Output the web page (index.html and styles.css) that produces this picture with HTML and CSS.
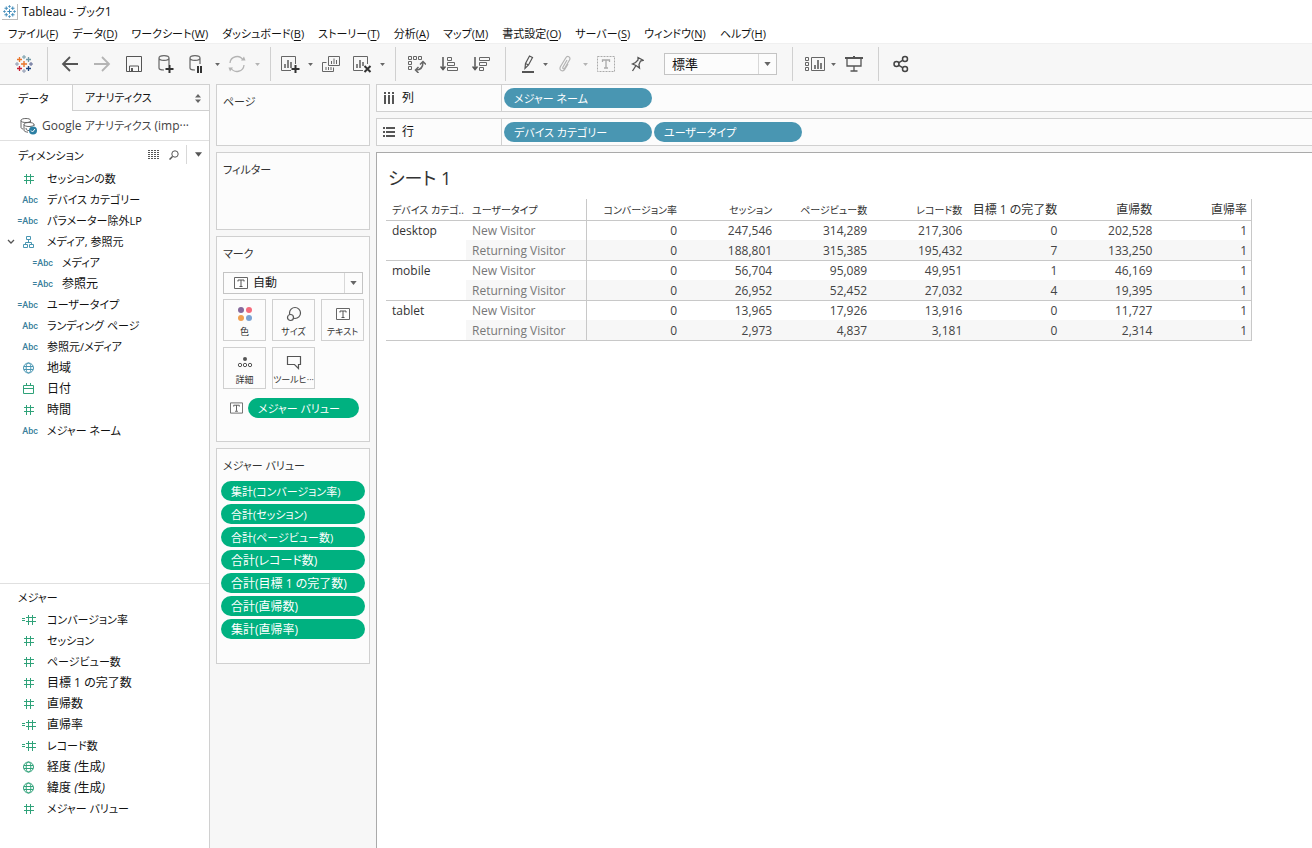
FILE: index.html
```html
<!DOCTYPE html>
<html lang="ja">
<head>
<meta charset="utf-8">
<title>Tableau - ブック1</title>
<link rel="stylesheet" href="styles.css">
</head>
<body>
<svg class="defs" aria-hidden="true">
  <symbol id="plus-ring" viewBox="0 0 18 18"><path d="M9 6v6M6 9h6" stroke="var(--c1)" stroke-width="1.4"/><path d="M9 0v4M7 2h4" stroke="var(--c2)"/><path d="M9 14v4M7 16h4" stroke="var(--c3)"/><path d="M2 7v4M0 9h4" stroke="var(--c3)"/><path d="M16 7v4M14 9h4" stroke="var(--c4)"/><path d="M4.500 2v5M2 4.500h5" stroke="var(--c1)" stroke-width="1.300"/><path d="M13.500 2v5M11 4.500h5" stroke="var(--c2)" stroke-width="1.300"/><path d="M4.500 11v5M2 13.500h5" stroke="var(--c5)" stroke-width="1.300"/><path d="M13.500 11v5M11 13.500h5" stroke="var(--c6)" stroke-width="1.300"/></symbol>
  <symbol id="caret" viewBox="0 0 8 5"><path d="M0 0h8L4 5z" fill="currentColor"/></symbol>
  <symbol id="hash" viewBox="0 0 14 12"><path d="M4.500 1v10M8.500 1v10M2 3.500h10M2 7.500h10" fill="none" stroke="currentColor"/></symbol>
  <symbol id="calc-hash" viewBox="0 0 14 12"><path d="M6.500 1v10M10.500 1v10M4 3.500h10M4 7.500h10M0 4.500h3M0 6.500h3" fill="none" stroke="currentColor"/></symbol>
  <symbol id="globe" viewBox="0 0 14 12"><g fill="none" stroke="currentColor"><circle cx="6.500" cy="6" r="5"/><ellipse cx="6.500" cy="6" rx="2.300" ry="5"/><path d="M2 4.500h9M2 7.500h9"/></g></symbol>
  <symbol id="cal" viewBox="0 0 14 12"><path d="M1.500 2.500h10v8h-10zM1.500 5.500h10M4.500 0v3M8.500 0v3" fill="none" stroke="currentColor"/></symbol>
  <symbol id="tree" viewBox="0 0 14 12"><path d="M4.500.5h4v3h-4zM1.500 8.500h4v3h-4zM7.500 8.500h4v3h-4zM6.500 4v2.500M3.500 8V6.500h6V8" fill="none" stroke="currentColor"/></symbol>
  <symbol id="t-box" viewBox="0 0 14 12"><path d="M.5.5h13v11H.5z" fill="#fff" stroke="#666"/><path d="M4 4.500V3h6v1.500M7 3v6M5.500 9.500h3" fill="none" stroke="#555"/></symbol>
</svg>

<header class="titlebar">
  <svg class="app-icon" viewBox="0 0 18 18" aria-hidden="true"><use href="#plus-ring"/></svg>
  <span>Tableau - <span class="kana">ブック</span>1</span>
</header>
<nav class="menubar" aria-label="メニュー">
  <button>ファイル(<u>F</u>)</button><button>データ(<u>D</u>)</button><button>ワークシート(<u>W</u>)</button><button>ダッシュボード(<u>B</u>)</button><button>ストーリー(<u>T</u>)</button><button>分析(<u>A</u>)</button><button>マップ(<u>M</u>)</button><button>書式設定(<u>O</u>)</button><button>サーバー(<u>S</u>)</button><button>ウィンドウ(<u>N</u>)</button><button>ヘルプ(<u>H</u>)</button>
</nav>

<div class="toolbar" role="toolbar" aria-label="ツール">
  <div class="group start">
    <button aria-label="スタート"><svg class="logo" width="18" height="18"><use href="#plus-ring"/></svg></button>
  </div>
  <div class="group history">
    <button aria-label="元に戻す"><svg width="18" height="16" viewBox="0 0 18 16"><path d="M17 8H2M9 1L2 8l7 7" fill="none" stroke="#555" stroke-width="1.800"/></svg></button>
    <button aria-label="やり直す"><svg width="18" height="16" viewBox="0 0 18 16"><path d="M1 8h15M9 1l7 7-7 7" fill="none" stroke="#b4b4b4" stroke-width="1.800"/></svg></button>
    <button aria-label="保存"><svg width="18" height="18" viewBox="0 0 18 18"><path d="M1.500 1.500h15v15h-15zM4.500 16v-5h9v5" fill="none" stroke="#555"/><path d="M6 13h2v3H6z" fill="#555"/></svg></button>
    <button aria-label="新しいデータソース"><svg width="18" height="20" viewBox="0 0 18 20"><path d="M7 16c-3 0-5-.8-5-2V4m10 0v7M12 4c0 1.400-2.200 2.400-5 2.400S2 5.400 2 4s2.200-2.400 5-2.400S12 2.600 12 4z" fill="none" stroke="#666" stroke-width="1.200"/><path d="M12.500 11v8M8.500 15h8" stroke="#333" stroke-width="2"/></svg></button>
    <button class="split" aria-label="自動更新の一時停止"><svg width="18" height="20" viewBox="0 0 18 20"><path d="M7 16c-3 0-5-.8-5-2V4m10 0v6M12 4c0 1.400-2.200 2.400-5 2.400S2 5.400 2 4s2.200-2.400 5-2.400S12 2.600 12 4z" fill="none" stroke="#666" stroke-width="1.200"/><path d="M10 12v7M13 12v7" stroke="#333" stroke-width="2"/></svg></button>
    <button class="drop" aria-label="更新オプション"><svg><use href="#caret"/></svg></button>
    <button class="split" aria-label="更新"><svg width="18" height="18" viewBox="0 0 18 18"><path d="M2 8a7 7 0 0 1 13-3M16 10a7 7 0 0 1-13 3" fill="none" stroke="#b4b4b4" stroke-width="1.300"/><path d="M13 5.500h4.500L16 1.500zM5 12.500H.5l1.500 4z" fill="#b4b4b4"/></svg></button>
    <button class="drop off" aria-label="更新メニュー"><svg><use href="#caret"/></svg></button>
  </div>
  <div class="group sheets">
    <button class="split" aria-label="新しいワークシート"><svg width="20" height="18" viewBox="0 0 20 18"><path d="M11 15.500H1.500v-14h14V9" fill="none" stroke="#666"/><path d="M5 9v4M8 5v8M11 7v6" stroke="#666" stroke-width="1.600"/><path d="M15.500 10v8M11.500 14h8" stroke="#333" stroke-width="2"/></svg></button>
    <button class="drop" aria-label="新規メニュー"><svg><use href="#caret"/></svg></button>
    <button aria-label="複製"><svg width="18" height="18" viewBox="0 0 18 18"><path d="M6.500 1.500h11v9h-11zM4.500 7.500h-4v9h11v-4" fill="none" stroke="#666"/><path d="M9.500 6v3M12 3.500V9M14.500 5v4M4 12v3M6.500 12v3M9 12v3" stroke="#666"/></svg></button>
    <button class="split" aria-label="シートのクリア"><svg width="20" height="18" viewBox="0 0 20 18"><path d="M11 15.500H1.500v-14h14V9" fill="none" stroke="#666"/><path d="M5 9v4M8 5v8M11 7v4" stroke="#666" stroke-width="1.600"/><path d="M12.500 11l6 6M18.500 11l-6 6" stroke="#333" stroke-width="2"/></svg></button>
    <button class="drop" aria-label="クリアメニュー"><svg><use href="#caret"/></svg></button>
  </div>
  <div class="group sorting">
    <button aria-label="行と列の入れ替え"><svg width="18" height="18" viewBox="0 0 18 18"><path d="M.5 1.500h3v3h-3zM5.500 1.500h3v3h-3zM10.500 1.500h3v3h-3zM.5 6.500h3v3h-3zM.5 11.500h3v3h-3z" fill="none" stroke="#666"/><path d="M15 7c0 5-2 8-7 8M12 9.500L15 6.500l3 3M10.500 12l-3 3 3 3" fill="none" stroke="#666" stroke-width="1.500"/></svg></button>
    <button aria-label="昇順で並べ替え"><svg width="18" height="18" viewBox="0 0 18 18"><path d="M3 2v12M.5 11.500L3 14.500l2.500-3" fill="none" stroke="#555" stroke-width="1.500"/><path d="M7.500 2.500h4v3h-4zM7.500 7.500h7v3h-7zM7.500 12.500h10v3h-10z" fill="none" stroke="#666"/></svg></button>
    <button aria-label="降順で並べ替え"><svg width="18" height="18" viewBox="0 0 18 18"><path d="M3 2v12M.5 11.500L3 14.500l2.500-3" fill="none" stroke="#555" stroke-width="1.500"/><path d="M7.500 2.500h10v3h-10zM7.500 7.500h7v3h-7zM7.500 12.500h4v3h-4z" fill="none" stroke="#666"/></svg></button>
  </div>
  <div class="group marks-tools">
    <button class="pen" aria-label="ハイライト"><svg width="14" height="20" viewBox="0 0 14 20"><path d="M8.500 2L11.500 3.500 7.500 11 4 14.500l.5-5zM4.500 9.500l3 1.500" fill="none" stroke="#555" stroke-width="1.200"/><path d="M1 18h12" stroke="#555" stroke-width="2"/></svg></button>
    <button class="drop" aria-label="ハイライトメニュー"><svg><use href="#caret"/></svg></button>
    <button class="split" aria-label="グループ"><svg width="14" height="18" viewBox="0 0 14 18"><path d="M9 5l-4 7c-.8 1.600 1 2.500 1.800 1L11.500 5c1.500-3-2-5-3.800-2L2.500 11.500c-2 4 2.500 6 4.500 2.500L10 9" fill="none" stroke="#b4b4b4" stroke-width="1.200"/></svg></button>
    <button class="drop off" aria-label="グループメニュー"><svg><use href="#caret"/></svg></button>
    <button aria-label="マークラベルの表示"><svg width="18" height="16" viewBox="0 0 18 16"><path d="M.5.5h17v15H.5z" fill="none" stroke="#aaa" stroke-dasharray="2 1"/><path d="M5.500 6V4h7v2M9 4v8M7 12h4" fill="none" stroke="#aaa" stroke-width="1.300"/></svg></button>
    <button class="split" aria-label="ピン"><svg width="14" height="18" viewBox="0 0 14 18"><path d="M8 2.500l5 2.800-2.500.7-1.500 3.500.5 3.500-3.500-2.500-3.500-1.500 3-1.500L8 5zM6 10.500l-3.500 5.500" fill="none" stroke="#555" stroke-width="1.300"/></svg></button>
    <label class="picker fit"><select aria-label="ビューのサイズ"><option>標準</option></select><span class="pick-arrow"><svg><use href="#caret"/></svg></span></label>
  </div>
  <div class="group views">
    <button class="show-me" aria-label="表示形式"><svg width="20" height="16" viewBox="0 0 20 16"><path d="M.5 1.500h3v3h-3zM.5 6.500h3v3h-3zM.5 11.500h3v3h-3zM6.500 1.500h13v13h-13z" fill="none" stroke="#666"/><path d="M10 9v4M13 4v9M16 7v6" stroke="#666" stroke-width="1.700"/></svg></button>
    <button class="drop" aria-label="表示メニュー"><svg><use href="#caret"/></svg></button>
    <button aria-label="プレゼンテーション"><svg width="18" height="16" viewBox="0 0 18 16"><path d="M0 2h18M9 0v2" stroke="#555" stroke-width="2"/><path d="M2 2v8h14V2M9 10v5M5.500 15h7" fill="none" stroke="#555" stroke-width="1.300"/></svg></button>
  </div>
  <div class="group share">
    <button aria-label="共有"><svg width="16" height="18" viewBox="0 0 16 18"><g fill="none" stroke="#444" stroke-width="1.500"><circle cx="3.500" cy="9" r="2.500"/><circle cx="12" cy="4" r="2.500"/><circle cx="12" cy="14" r="2.500"/><path d="M5.500 7.800L10 5.200M5.500 10.200L10 12.800"/></g></svg></button>
  </div>
</div>

<main class="workspace">
  <aside class="data-pane">
    <div class="tabs">
      <button class="tab active kana">データ</button>
      <button class="tab kana">アナリティクス<svg width="6" height="9" viewBox="0 0 6 9"><path d="M0 3.500L3 0l3 3.500zM0 5.500h6L3 9z" fill="#666"/></svg></button>
    </div>
    <button class="source"><svg width="18" height="18" viewBox="0 0 18 18"><path d="M3 12c-1.500-.3-2-1-2-1.800V3.500M10.500 3.500V5M10.500 3.500C10.500 5 8.500 5.500 6 5.500S1 5 1 3.500 3.500 1.500 6 1.500s4.500.6 4.500 2zM4 7.500v5.700c0 1 1.500 1.800 4 2M4 7.500c0-1.200 2-2 5-2s5 .8 5 2-2 2-5 2-5-.8-5-2zM14 7.500V9M6 11c0 2 1 2.500 3 2.500" fill="none" stroke="#666"/><circle cx="13" cy="13.500" r="4" fill="#2b7fa3"/><path d="M11 13.500l1.500 1.500 2.500-3" fill="none" stroke="#fff"/></svg><span>Google <span class="kana">アナリティクス</span> (imp···</span></button>
    <section class="fields dimensions">
      <div class="fields-head">
        <h2 class="kana">ディメンション</h2>
        <button aria-label="リスト表示"><svg width="12" height="9" viewBox="0 0 12 9"><path d="M0 .5h12M0 2.500h12M0 4.500h12M0 6.500h12M0 8.500h12" stroke="#555" stroke-dasharray="2 1"/></svg></button>
        <button aria-label="検索"><svg width="10" height="10" viewBox="0 0 10 10"><circle cx="6" cy="4" r="3.200" fill="none" stroke="#555"/><path d="M3.500 6.500L.5 9.500" stroke="#555" stroke-width="1.500"/></svg></button>
        <button class="more" aria-label="メニュー"><svg width="7" height="5"><use href="#caret"/></svg></button>
      </div>
      <ul class="field-list">
        <li class="green kana"><svg><use href="#hash"/></svg>セッションの数</li>
        <li class="kana"><i>Abc</i>デバイス カテゴリー</li>
        <li class="kana"><i>=Abc</i>パラメーター除外LP</li>
        <li class="open kana"><svg class="twisty" viewBox="0 0 8 6"><path d="M1 1l3 3 3-3" fill="none" stroke="#555" stroke-width="1.300"/></svg><svg><use href="#tree"/></svg>メディア, 参照元</li>
        <li class="child kana"><i>=Abc</i>メディア</li>
        <li class="child"><i>=Abc</i>参照元</li>
        <li class="kana"><i>=Abc</i>ユーザータイプ</li>
        <li class="kana"><i>Abc</i>ランディング ページ</li>
        <li class="kana"><i>Abc</i>参照元/メディア</li>
        <li><svg><use href="#globe"/></svg>地域</li>
        <li class="green"><svg><use href="#cal"/></svg>日付</li>
        <li class="green"><svg><use href="#hash"/></svg>時間</li>
        <li class="kana"><i>Abc</i>メジャー ネーム</li>
      </ul>
    </section>
    <section class="fields measures">
      <div class="fields-head"><h2 class="kana">メジャー</h2></div>
      <ul class="field-list">
        <li class="green kana"><svg><use href="#calc-hash"/></svg>コンバージョン率</li>
        <li class="green kana"><svg><use href="#hash"/></svg>セッション</li>
        <li class="green kana"><svg><use href="#hash"/></svg>ページビュー数</li>
        <li class="green"><svg><use href="#hash"/></svg>目標 1 の完了数</li>
        <li class="green"><svg><use href="#hash"/></svg>直帰数</li>
        <li class="green"><svg><use href="#calc-hash"/></svg>直帰率</li>
        <li class="green kana"><svg><use href="#calc-hash"/></svg>レコード数</li>
        <li class="green"><svg><use href="#globe"/></svg>経度 <em>(</em>生成<em>)</em></li>
        <li class="green"><svg><use href="#globe"/></svg>緯度 <em>(</em>生成<em>)</em></li>
        <li class="green kana"><svg><use href="#hash"/></svg>メジャー バリュー</li>
      </ul>
    </section>
  </aside>

  <div class="cards">
    <section class="card pages"><h2 class="kana">ページ</h2></section>
    <section class="card filters"><h2 class="kana">フィルター</h2></section>
    <section class="card marks">
      <h2 class="kana">マーク</h2>
      <label class="picker mark-type"><svg class="pick-icon"><use href="#t-box"/></svg><select aria-label="マークタイプ"><option>自動</option></select><span class="pick-arrow"><svg><use href="#caret"/></svg></span></label>
      <div class="mark-grid">
        <button><svg viewBox="0 0 18 16"><circle cx="5" cy="4" r="3" fill="#86699c"/><circle cx="13" cy="4" r="3" fill="#f56b7c"/><circle cx="5" cy="12" r="3" fill="#f0a050"/><circle cx="13" cy="12" r="3" fill="#7aa3d4"/></svg>色</button>
        <button><svg viewBox="0 0 18 16"><g fill="#fcfcfc" stroke="#555" stroke-width="1.200"><circle cx="10" cy="7" r="5.500"/><circle cx="5.500" cy="11.500" r="3"/></g></svg>サイズ</button>
        <button><svg viewBox="-2 -2 18 16"><use href="#t-box" width="14" height="12"/></svg>テキスト</button>
        <button><svg viewBox="0 0 18 16"><circle cx="9" cy="5" r="2" fill="#555"/><g fill="none" stroke="#555"><circle cx="4" cy="11" r="1.700"/><circle cx="9" cy="11" r="1.700"/><circle cx="14" cy="11" r="1.700"/></g></svg>詳細</button>
        <button><svg viewBox="0 0 18 16"><path d="M2.500 2.500h13v8h-2v4l-4-4h-7z" fill="none" stroke="#555" stroke-width="1.200"/></svg>ツールヒ···</button>
      </div>
      <div class="mark-row"><svg><use href="#t-box"/></svg><button class="pill green-pill kana">メジャー バリュー</button></div>
    </section>
    <section class="card values">
      <h2 class="kana">メジャー バリュー</h2>
      <div class="pill-stack">
        <button class="pill green-pill kana">集計(コンバージョン率)</button>
        <button class="pill green-pill kana">合計(セッション)</button>
        <button class="pill green-pill kana">合計(ページビュー数)</button>
        <button class="pill green-pill">合計(レコード数)</button>
        <button class="pill green-pill">合計(目標 1 の完了数)</button>
        <button class="pill green-pill">合計(直帰数)</button>
        <button class="pill green-pill">集計(直帰率)</button>
      </div>
    </section>
  </div>

  <div class="view">
    <section class="shelf">
      <h2><svg width="12" height="12" viewBox="0 0 12 12"><path d="M2 0v2M6 0v2M10 0v2M2 3v9M6 3v9M10 3v9" stroke="#555" stroke-width="2"/></svg>列</h2>
      <div class="drop-zone"><button class="pill blue-pill kana">メジャー ネーム</button></div>
    </section>
    <section class="shelf">
      <h2><svg width="12" height="12" viewBox="0 0 12 12"><path d="M0 2h2M0 6h2M0 10h2M3 2h9M3 6h9M3 10h9" stroke="#555" stroke-width="2"/></svg>行</h2>
      <div class="drop-zone"><button class="pill blue-pill kana">デバイス カテゴリー</button><button class="pill blue-pill kana">ユーザータイプ</button></div>
    </section>
    <section class="sheet">
      <h1>シート 1</h1>
      <table>
        <colgroup><col class="c-device"><col class="c-user"><col span="7" class="c-num"></colgroup>
        <thead>
          <tr><th class="device narrow">デバイス カテゴ..</th><th class="user narrow">ユーザータイプ</th><th class="narrow">コンバージョン率</th><th class="narrow">セッション</th><th class="narrow">ページビュー数</th><th class="narrow">レコード数</th><th>目標 1 の完了数</th><th>直帰数</th><th>直帰率</th></tr>
        </thead>
        <tbody>
          <tr><th class="device" rowspan="2">desktop</th><th class="user">New Visitor</th><td>0</td><td>247,546</td><td>314,289</td><td>217,306</td><td>0</td><td>202,528</td><td>1</td></tr>
          <tr class="band"><th class="user">Returning Visitor</th><td>0</td><td>188,801</td><td>315,385</td><td>195,432</td><td>7</td><td>133,250</td><td>1</td></tr>
        </tbody>
        <tbody>
          <tr><th class="device" rowspan="2">mobile</th><th class="user">New Visitor</th><td>0</td><td>56,704</td><td>95,089</td><td>49,951</td><td>1</td><td>46,169</td><td>1</td></tr>
          <tr class="band"><th class="user">Returning Visitor</th><td>0</td><td>26,952</td><td>52,452</td><td>27,032</td><td>4</td><td>19,395</td><td>1</td></tr>
        </tbody>
        <tbody>
          <tr><th class="device" rowspan="2">tablet</th><th class="user">New Visitor</th><td>0</td><td>13,965</td><td>17,926</td><td>13,916</td><td>0</td><td>11,727</td><td>1</td></tr>
          <tr class="band"><th class="user">Returning Visitor</th><td>0</td><td>2,973</td><td>4,837</td><td>3,181</td><td>0</td><td>2,314</td><td>1</td></tr>
        </tbody>
      </table>
    </section>
  </div>
</main>
</body>
</html>
```
FILE: styles.css
```css
* { box-sizing: border-box; }

body {
  margin: 0;
  min-height: 100vh;
  display: flex;
  flex-direction: column;
  background: #f7f7f7;
  color: #111;
  font: 12px/20px "Open Sans", "Noto Sans CJK JP", sans-serif;
  font-feature-settings: "palt";
}

button, select {
  margin: 0;
  padding: 0;
  border: 0;
  background: none;
  color: inherit;
  font: inherit;
  font-feature-settings: inherit;
  white-space: nowrap;
}

h1, h2, ul { margin: 0; padding: 0; font-weight: 400; }
h2 { font-size: 12px; }
svg { flex: none; display: block; }
.kana { font-size: 11px; }
.defs { position: absolute; width: 0; height: 0; }

/* Title and menus */
.titlebar {
  display: flex;
  align-items: center;
  gap: 4px;
  height: 24px;
  padding-left: 2px;
  background: #fff;
}
.app-icon {
  width: 16px;
  height: 16px;
  padding: 1px;
  border-right: 1px solid #bbb;
  border-bottom: 1px solid #bbb;
  --c1: #3a87b7; --c2: #3a87b7; --c3: #3a87b7; --c4: #3a87b7; --c5: #3a87b7; --c6: #3a87b7;
}
.menubar {
  display: flex;
  gap: 14px;
  height: 19px;
  padding-left: 8px;
  background: #fff;
  font-size: 11px;
}
.menubar u { text-underline-offset: 2px; }

/* Toolbar */
.toolbar {
  display: flex;
  height: 41px;
  padding: 3px 0;
  border-top: 1px solid #f0f0f0;
}
.group { display: flex; align-items: center; border-right: 1px solid #d0d0d0; }
.group button { display: flex; align-items: center; justify-content: center; width: 32px; height: 32px; }
.group .split { width: 30px; }
.group .pen { width: 24px; }
.group .show-me { width: 26px; }
.group .drop { width: 10px; color: #666; }
.group .off { color: #b4b4b4; }
.drop svg { width: 5px; height: 3px; }
.start { padding: 0 7px 0 8px; }
.history { padding: 0 8px 0 6px; }
.sheets { padding: 0 8px 0 4px; }
.sorting { padding: 0 8px 0 5px; }
.marks-tools { padding: 0 15px 0 10px; }
.views { padding: 0 8px 0 9px; }
.share { padding-left: 6px; border: 0; }
.logo { --c1: #e8762c; --c2: #7199a6; --c3: #8c98b0; --c4: #5b6591; --c5: #c72035; --c6: #1f457e; }

/* Drop-down boxes */
.picker {
  display: flex;
  align-items: stretch;
  height: 22px;
  border: 1px solid #c4c4c4;
  background: #fcfcfc;
}
.picker select { flex: 1; min-width: 0; appearance: none; outline: 0; }
.pick-arrow {
  display: flex;
  align-items: center;
  justify-content: center;
  width: 18px;
  border-left: 1px solid #d8d8d8;
  color: #666;
}
.pick-arrow svg { width: 7px; height: 4px; }
.fit { width: 113px; margin-left: 12px; font-size: 13px; }
.fit select { padding-left: 7px; }

/* Main area */
.workspace {
  flex: 1;
  display: grid;
  grid-template-columns: 210px 154px minmax(0, 1fr);
  column-gap: 6px;
}

/* Data pane */
.data-pane {
  display: flex;
  flex-direction: column;
  border-right: 1px solid #d0d0d0;
  background: #fff;
}
.tabs { display: grid; grid-template-columns: 72px 1fr; height: 27px; }
.tab {
  display: flex;
  align-items: center;
  justify-content: space-between;
  padding: 1px 8px 0 12px;
  border: solid #d0d0d0;
  border-width: 1px 0 1px 1px;
  background: #fafafa;
}
.tab.active { padding-left: 18px; border-width: 1px 0 0; background: #fff; }
.source {
  display: flex;
  align-items: center;
  gap: 4px;
  height: 30px;
  padding-left: 20px;
  border-bottom: 1px solid #e0e0e0;
  color: #444;
}
.fields.dimensions { flex: 1 0 auto; }
.fields.measures { flex: 0 0 265px; border-top: 1px solid #e0e0e0; }
.fields-head { display: flex; align-items: center; height: 27px; padding-left: 18px; }
.fields-head h2 { flex: 1; padding-top: 2px; }
.fields-head button { display: flex; align-items: center; justify-content: center; width: 20px; height: 19px; }
.fields-head .more { width: 23px; margin-left: 2px; border-left: 1px solid #d8d8d8; color: #555; }
.measures .fields-head { height: 25px; }
.field-list { list-style: none; }
.field-list li {
  display: flex;
  align-items: center;
  height: 21px;
  padding-left: 12px;
  color: #111;
  white-space: pre;
}
.field-list .child { padding-left: 27px; }
.field-list svg { width: 14px; height: 12px; margin: 0 11px 0 10px; color: #4996b2; }
.field-list .green svg { color: #2fa279; }
.field-list .open { padding-left: 7px; }
.field-list .twisty { width: 8px; height: 6px; margin: 0 -3px 0 0; }
.field-list i {
  width: 26px;
  margin-right: 9px;
  color: #3a7f9c;
  font: 500 9px/20px Roboto, sans-serif;
  text-align: right;
}

/* Cards */
.cards { display: flex; flex-direction: column; gap: 6px; }
.card { padding: 6px; border: 1px solid #d0d0d0; background: #fcfcfc; color: #333; }
.card h2 { padding-top: 1px; }
.pages { height: 62px; }
.filters { height: 78px; }
.marks { height: 206px; }
.values { height: 216px; }
.mark-type { margin-top: 8px; color: #222; }
.mark-type .pick-icon { width: 14px; height: 12px; margin: 4px 5px 0 10px; }
.mark-grid { display: grid; grid-template-columns: repeat(3, 43px); justify-content: space-between; gap: 6px; margin-top: 5px; }
.mark-grid button {
  display: flex;
  flex-direction: column;
  align-items: center;
  height: 42px;
  padding-top: 6px;
  overflow: hidden;
  border: 1px solid #d0d0d0;
  font-size: 9px;
  line-height: 20px;
}
.mark-grid svg { width: 18px; height: 16px; }
.mark-row { display: flex; align-items: center; gap: 5px; margin-top: 9px; padding: 0 4px 0 7px; }
.mark-row svg { width: 13px; height: 12px; }
.pill {
  height: 20px;
  padding: 1px 10px 0;
  border-radius: 10px;
  color: #fff;
  text-align: left;
}
.green-pill { background: #00b180; }
.blue-pill { width: 148px; background: #4996b2; }
.mark-row .pill { flex: 1; }
.pill-stack { display: grid; gap: 3px; margin: 5px -2px 0; }

/* Shelves */
.view { display: flex; flex-direction: column; gap: 6px; min-width: 0; }
.shelf { display: flex; height: 28px; border: 1px solid #d0d0d0; border-right: 0; background: #fcfcfc; }
.shelf h2 { display: flex; align-items: center; gap: 7px; width: 125px; padding-left: 6px; border-right: 1px solid #d0d0d0; }
.drop-zone { display: flex; align-items: center; gap: 2px; padding-left: 2px; }

/* Sheet */
.sheet { flex: 1; padding: 12px 9px; border: solid #aaa; border-width: 1px 0 0 1px; background: #fff; }
.sheet h1 { padding: 0 2px 8px; font-size: 18px; line-height: 26px; color: #333; }
table { width: 866px; table-layout: fixed; border-collapse: collapse; color: #444; }
.c-device { width: 80px; }
.c-user { width: 120px; }
tr { height: 20px; }
th, td { padding: 0 4px 0 6px; font-weight: 400; line-height: 19px; text-align: right; white-space: nowrap; }
th { padding-left: 0; color: #333; }
th.device, th.user { padding: 0 0 0 6px; text-align: left; vertical-align: top; }
thead .narrow { font-size: 10px; }
thead th, thead th.device, thead th.user { height: 21px; padding-top: 2px; line-height: 18px; vertical-align: middle; }
th.user { border-right: 1px solid #c8c8c8; }
tbody th.user { color: #777; }
tbody { border-top: 1px solid #c8c8c8; }
tbody:last-child { border-bottom: 1px solid #c8c8c8; }
tr > :last-child { border-right: 1px solid #c8c8c8; }
.band td, .band .user { background: #f7f7f7; }
.band td, .band th.user { padding-top: 2px; line-height: 17px; }
```
